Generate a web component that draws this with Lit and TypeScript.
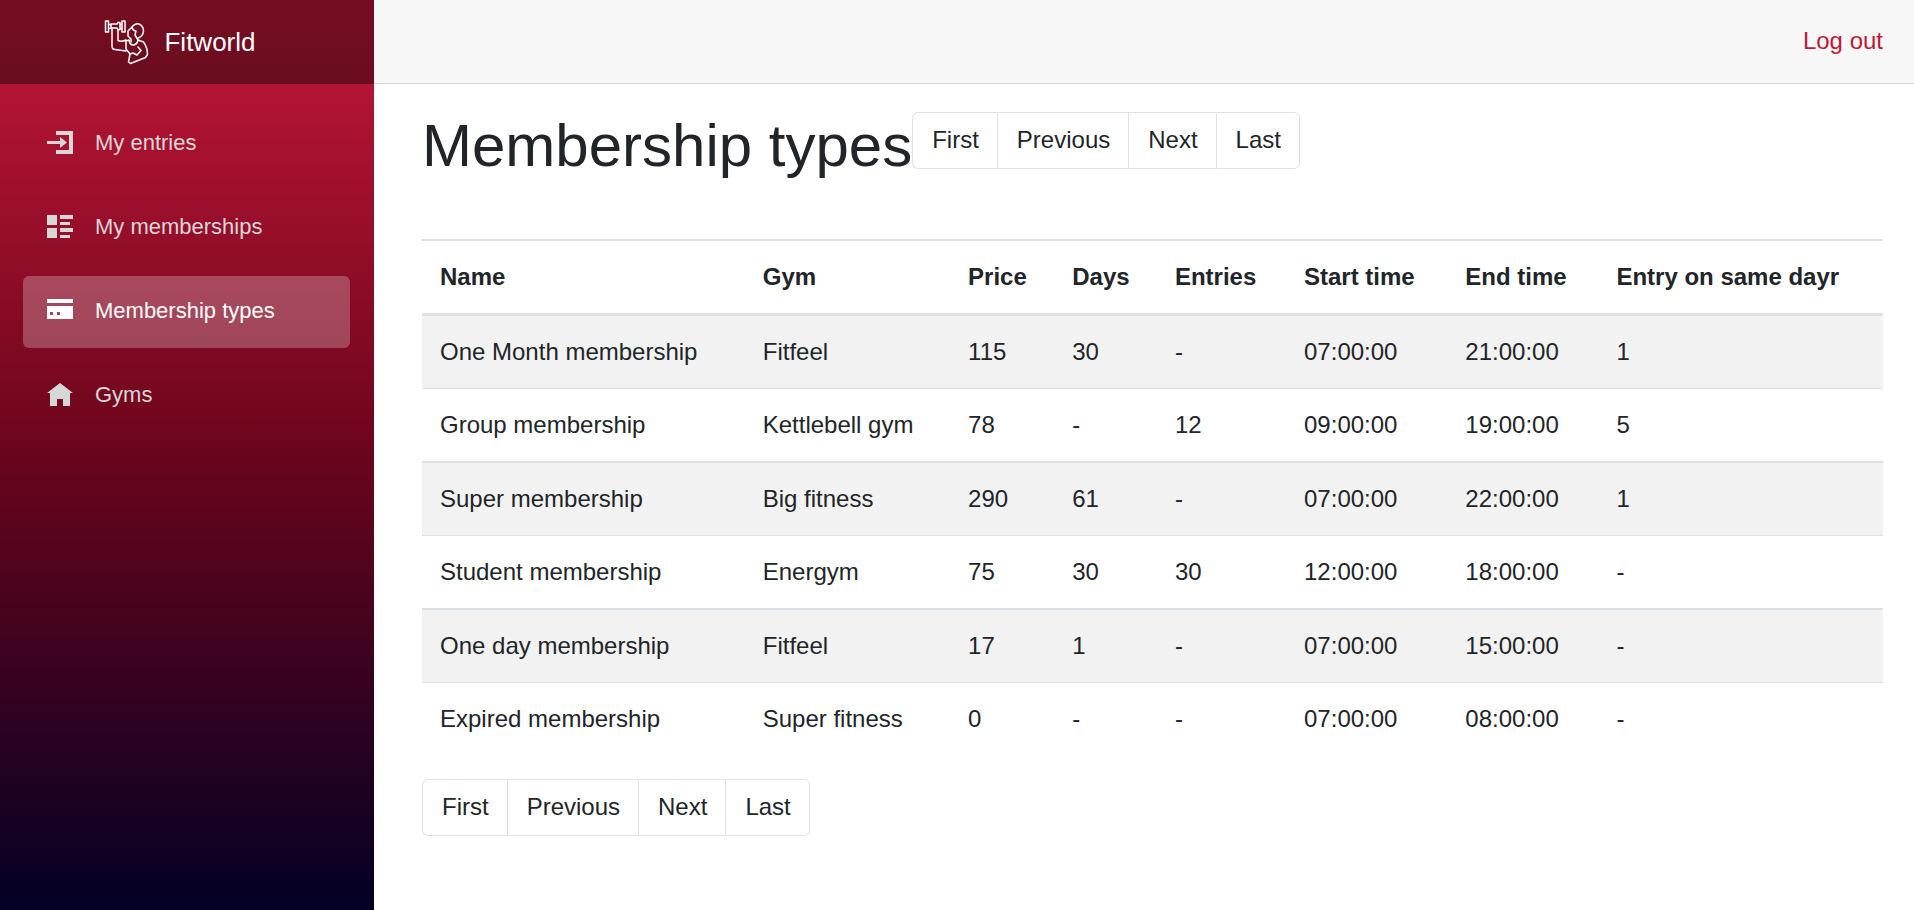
import { LitElement, html, css, svg } from "lit";
import { customElement } from "lit/decorators.js";

const icons = {
  entries: svg`<path d="M9 0h17v23H9v-4h13V4H9zM0 10h13V6l7 5.500-7 5.500v-4H0z"/>`,
  memberships: svg`<path d="M0 0h10v10H0zM0 13h10v10H0zM13 0h13v4H13zM13 7h10v3H13zM13 13h13v4H13zM13 20h10v3H13z"/>`,
  types: svg`<path d="M0 0h26v4H0z"/><path fill-rule="evenodd" d="M0 7h26v13H0zM3 13v3h3v-3zM10 13v3h3v-3z"/>`,
  gyms: svg`<path d="M13 0l13 10h-3v13h-7v-7h-6v7H3V10H0z"/>`,
};

const links = [
  { label: "My entries", icon: icons.entries },
  { label: "My memberships", icon: icons.memberships },
  { label: "Membership types", icon: icons.types, active: true },
  { label: "Gyms", icon: icons.gyms },
];

@customElement("page-buttons")
class PageButtons extends LitElement {
  static styles = css`
    :host { display: block; }
    .pagination { display: flex; margin: 0; padding: 0; list-style: none; }
    .item { display: flex; }
    .link {
      font: inherit; line-height: 30px; color: #212529; background: #fff;
      border: 1px solid #dee2e6; border-right-width: 0; margin: 0;
      padding: 12px 18px 13px 19px; cursor: pointer;
    }
    .item:first-child .link { border-radius: 6px 0 0 6px; }
    .item:last-child .link { border-right-width: 1px; border-radius: 0 6px 6px 0; }
  `;
  render() {
    return html`<ul class="pagination">
      ${["First", "Previous", "Next", "Last"].map(
        (t) => html`<li class="item"><button class="link" type="button">${t}</button></li>`
      )}
    </ul>`;
  }
}

const columns = ["Name", "Gym", "Price", "Days", "Entries", "Start time", "End time", "Entry on same dayr"];
const rows = [
  ["One Month membership", "Fitfeel", "115", "30", "-", "07:00:00", "21:00:00", "1"],
  ["Group membership", "Kettlebell gym", "78", "-", "12", "09:00:00", "19:00:00", "5"],
  ["Super membership", "Big fitness", "290", "61", "-", "07:00:00", "22:00:00", "1"],
  ["Student membership", "Energym", "75", "30", "30", "12:00:00", "18:00:00", "-"],
  ["One day membership", "Fitfeel", "17", "1", "-", "07:00:00", "15:00:00", "-"],
  ["Expired membership", "Super fitness", "0", "-", "-", "07:00:00", "08:00:00", "-"],
];

@customElement("app-root")
class AppRoot extends LitElement {
  static styles = css`
    :host {
      display: flex; min-height: 100vh; box-sizing: border-box; background: #fff;
      font-family: "Liberation Sans", Arial, sans-serif; font-size: 24px; line-height: 36px; color: #212529;
    }
    *, *::before, *::after { box-sizing: border-box; }
    .sidebar {
      flex: 0 0 374px;
      background: linear-gradient(180deg, #c4173a 0%, #6a051b 50%, #020024 100%);
    }
    .brand {
      height: 84px; display: flex; align-items: center; justify-content: center; gap: 14px;
      padding-right: 14px; background: rgba(0, 0, 0, 0.4);
      color: #fff; font-size: 26px; text-decoration: none;
    }
    .logo { width: 46px; height: 46px; }
    .nav { display: flex; flex-direction: column; gap: 12px; padding: 24px 24px 24px 23px; }
    .nav-link {
      display: flex; align-items: center; height: 72px; padding: 0 24px 3px; gap: 21px;
      border-radius: 6px; color: #d7d7d7; font-size: 22px; text-decoration: none;
    }
    .nav-link.active { background: rgba(255, 255, 255, 0.25); color: #fff; }
    .nav-icon { width: 27px; height: 23px; fill: currentColor; }
    .main { flex: 1; min-width: 0; }
    .top {
      height: 84px; display: flex; align-items: center; justify-content: flex-end;
      padding: 0 31px 2px; background: #f7f7f7; border-bottom: 1px solid #d6d5d5;
    }
    .logout { color: #bf1738; text-decoration: none; }
    .content { padding: 28px 31px 28px 48px; }
    .heading { display: flex; align-items: flex-start; margin-bottom: 59px; }
    .title { margin: 0; font-size: 60px; line-height: 68px; font-weight: 500; }
    .table { width: 100%; border-collapse: separate; border-spacing: 0; margin-bottom: 24px; }
    .cell { padding: 18px; text-align: left; border-top: 1px solid #dee2e6; font-weight: 400; }
    .head { font-weight: 700; border-top-width: 2px; border-bottom: 3px solid #dee2e6; }
    .row:nth-child(odd) .cell { background: #f2f2f2; border-top-width: 2px; }
    .row:first-child .cell { border-top-width: 0; }
  `;

  render() {
    return html`
      <nav class="sidebar" aria-label="Main">
        <a class="brand" href="#">
          <svg class="logo" viewBox="0 0 46 46" fill="none" stroke="#fff" stroke-width="1.500" stroke-linejoin="round" stroke-linecap="round" aria-hidden="true">
            <path d="M1.500 2h3v11h-3zM18 2h3v11h-3zM4.500 5.500h2M4.500 9.500h2M16 5.500h2M16 9.500h2M7 5h6l1-1.500h2v7l-2 .500-1-2H8l-1-1z"/>
            <path d="M8 9v18q0 3.500 3 3.500l11 1.500M14 11v10.500q4 1.500 8-.500"/>
            <path d="M28 8q3-4 7-3 4.500 2 4.500 7-.500 5-5 7M28 8l-4 4v5l3 3v3M28 8q1 4 4 4l-1 4 3 5"/>
            <path d="M22 22v8l4 5-1.500 8 2 1.500 15-6 2-3q0-7-4-12.500l-5.500-2q-1 5-5 5-3 0-4-5zM26 35l3-1 4 2 4-4.500-3-3.500"/>
          </svg>
          <span>Fitworld</span>
        </a>
        <div class="nav">
          ${links.map(
            (l) => html`<a class="nav-link ${l.active ? "active" : ""}" href="#">
              <svg class="nav-icon" viewBox="0 0 27 23" aria-hidden="true">${l.icon}</svg>
              <span>${l.label}</span>
            </a>`
          )}
        </div>
      </nav>
      <div class="main">
        <header class="top"><a class="logout" href="#">Log out</a></header>
        <main class="content">
          <div class="heading">
            <h1 class="title">Membership types</h1>
            <page-buttons></page-buttons>
          </div>
          <table class="table">
            <thead><tr>${columns.map((c) => html`<th class="cell head" scope="col">${c}</th>`)}</tr></thead>
            <tbody>
              ${rows.map((r) => html`<tr class="row">${r.map((c) => html`<td class="cell">${c}</td>`)}</tr>`)}
            </tbody>
          </table>
          <page-buttons></page-buttons>
        </main>
      </div>
    `;
  }
}
